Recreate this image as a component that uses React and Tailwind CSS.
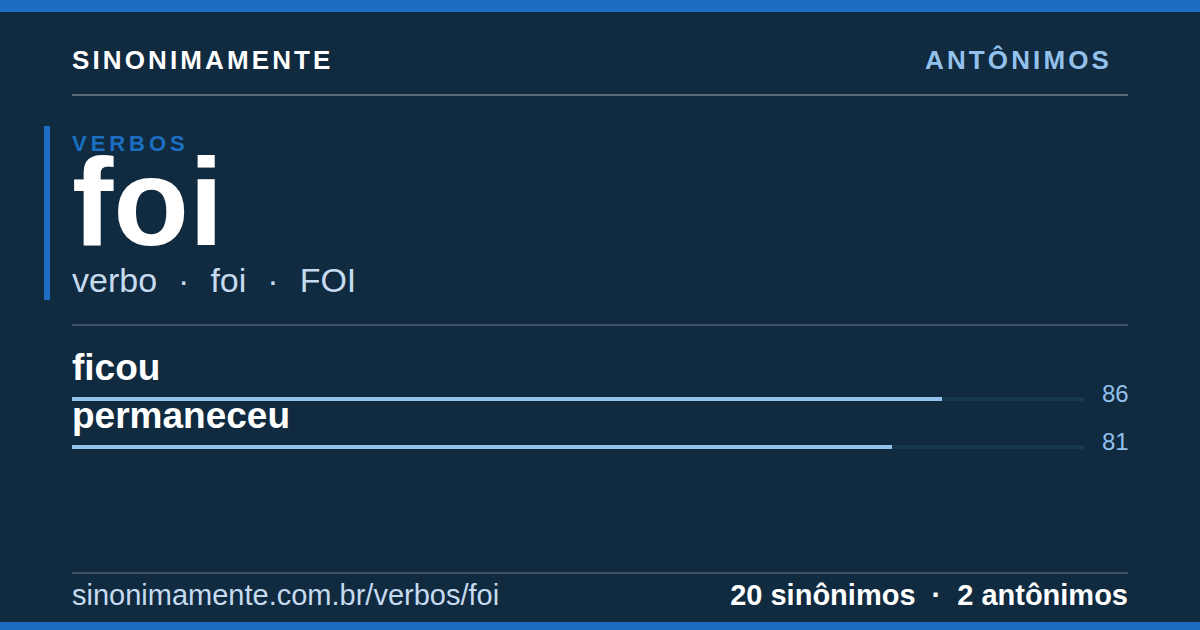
const WORD = {
  category: 'VERBOS',
  term: 'foi',
  forms: ['verbo', 'foi', 'FOI'],
  url: 'sinonimamente.com.br/verbos/foi',
  synonyms: 20,
  antonyms: 2,
}

const RESULTS = [
  { word: 'ficou',      score: 86 },
  { word: 'permaneceu', score: 81 },
]

function ScoreRow({ word, score }) {
  return (
    <div className="flex items-end gap-[18px]">
      <div className="flex-1 flex flex-col">
        <span className="text-[37px] leading-[29px] font-bold text-white">{word}</span>
        <div className="mt-[15px] h-1 bg-[#17384f]">
          <div className="h-full bg-[#93c1ec]" style={{ width: `${score}%` }} />
        </div>
      </div>
      <span className="w-[26px] text-right text-[24px] leading-[14px] text-[#93c1ec]">{score}</span>
    </div>
  )
}

export default function App() {
  return (
    <div className="w-[1200px] h-[630px] flex flex-col bg-[#102a3f] font-['Liberation_Sans',Arial,sans-serif]">
      <div className="h-3 bg-[#1b6ec2]" />

      <div className="flex-1 flex flex-col px-[72px]">
        {/* Header */}
        <div className="flex items-baseline justify-between pt-[35px] pb-[21px] border-b-2 border-[#5b6b79] leading-[26px]">
          <span className="text-[26px] font-bold tracking-[0.12em] text-white">SINONIMAMENTE</span>
          <span className="mr-4 text-[26px] font-bold tracking-[0.12em] text-[#93c1ec]">ANTÔNIMOS</span>
        </div>

        {/* Hero */}
        <div className="mt-[30px] -ml-[28px] pl-[22px] pt-[7px] border-l-[6px] border-[#1b6ec2]">
          <p className="text-[22px] leading-[22px] font-bold tracking-[0.18em] text-[#1b6ec2]">{WORD.category}</p>
          <h1 className="text-[124px] leading-[94px] font-bold text-white">{WORD.term}</h1>
          <div className="mt-[12px] flex items-baseline gap-[21px] text-[34px] leading-[39px] text-[#c6dbef]">
            {WORD.forms.map((f, i) => (
              <span key={i} className="flex items-baseline gap-[21px]">
                {i > 0 && <span>·</span>}
                <span>{f}</span>
              </span>
            ))}
          </div>
        </div>

        {/* Results */}
        <div className="mt-[24px] pt-[27px] border-t-2 border-[#3a5166] flex flex-col">
          {RESULTS.map(r => <ScoreRow key={r.word} {...r} />)}
        </div>

        {/* Footer */}
        <div className="mt-auto flex items-baseline justify-between pt-[5px] pb-[10px] border-t-2 border-[#3f505e] text-[29px] leading-[33px]">
          <span className="text-[#c6dbef]">{WORD.url}</span>
          <span className="flex items-baseline gap-4 font-bold text-white">
            <span>{WORD.synonyms} sinônimos</span>
            <span>·</span>
            <span>{WORD.antonyms} antônimos</span>
          </span>
        </div>
      </div>

      <div className="h-2 bg-[#1b6ec2]" />
    </div>
  )
}
